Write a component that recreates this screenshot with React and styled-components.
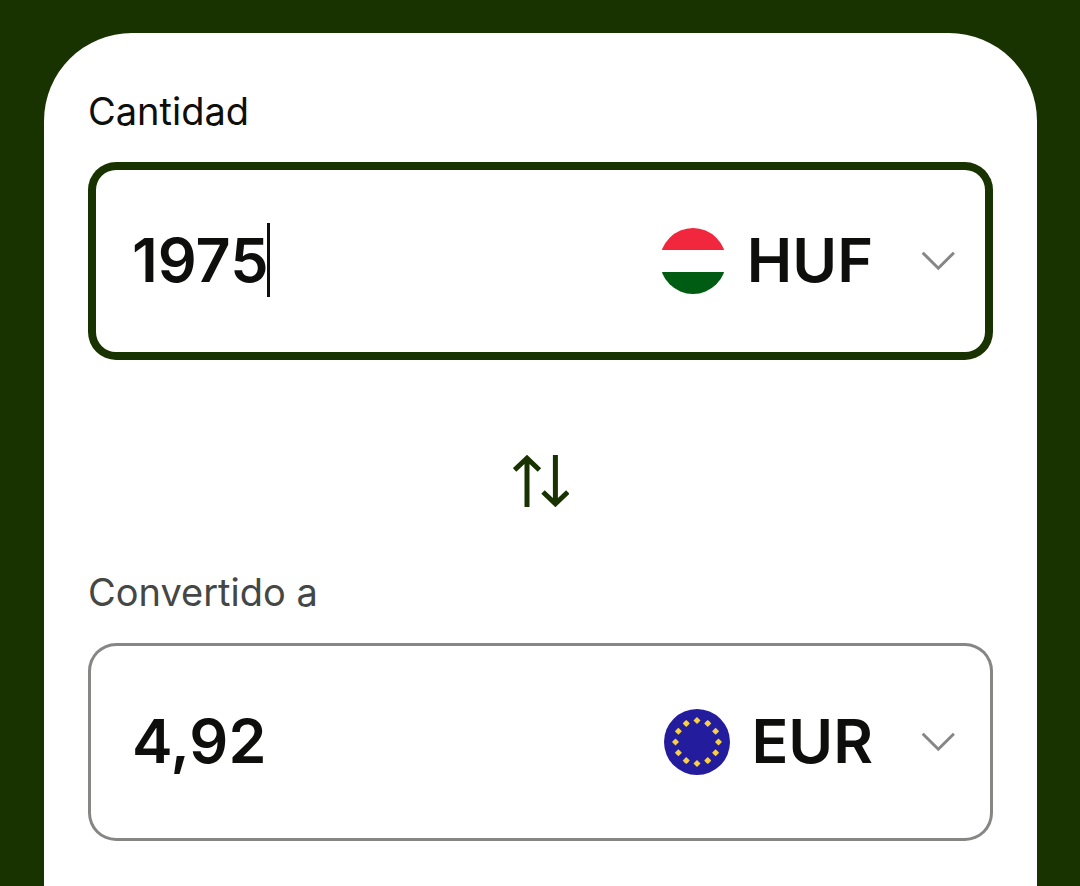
import React, { useState } from 'react';
import styled, { createGlobalStyle, css } from 'styled-components';

const colors = {
  forest: '#183300',
  ink: '#0e0f0c',
  label: '#454745',
  outline: '#868685',
  white: '#ffffff',
};

const currencies = ['HUF', 'EUR'];

export default function App() {
  const [from, setFrom] = useState({ amount: '1975', currency: 'HUF' });
  const [to, setTo] = useState({ amount: '4,92', currency: 'EUR' });
  const [active, setActive] = useState('from');

  const swap = () => {
    setFrom(to);
    setTo(from);
  };

  return (
    <Page>
      <GlobalStyle />

      <Card>
        <MoneyField
          id="from"
          label="Cantidad"
          value={from}
          onChange={setFrom}
          active={active === 'from'}
          onActivate={setActive}
        />

        <SwapButton type="button" aria-label="Intercambiar" onClick={swap}>
          <SwapIcon />
        </SwapButton>

        <MoneyField
          id="to"
          label="Convertido a"
          value={to}
          onChange={setTo}
          active={active === 'to'}
          onActivate={setActive}
        />
      </Card>
    </Page>
  );
}

function MoneyField({ id, label, value, onChange, active, onActivate }) {
  return (
    <Field>
      <Label id={`${id}-label`} htmlFor={id} $active={active}>
        {label}
      </Label>

      <Box $active={active} onFocus={() => onActivate(id)}>
        <AmountWrapper>
          <Amount
            id={id}
            type="text"
            inputMode="decimal"
            value={value.amount}
            onChange={(e) => onChange({ ...value, amount: e.target.value })}
          />
          {active && <Caret />}
        </AmountWrapper>

        <Currency>
          {value.currency === 'HUF' ? <HungaryFlag /> : <EuropeFlag />}
          <CurrencySelect
            aria-labelledby={`${id}-label`}
            value={value.currency}
            onChange={(e) => onChange({ ...value, currency: e.target.value })}
          >
            {currencies.map((code) => (
              <option key={code}>{code}</option>
            ))}
          </CurrencySelect>
          <Chevron />
        </Currency>
      </Box>
    </Field>
  );
}

function HungaryFlag() {
  return (
    <Flag viewBox="0 0 66 66" aria-hidden="true">
      <clipPath id="hungary">
        <circle cx="33" cy="33" r="33" />
      </clipPath>
      <g clipPath="url(#hungary)">
        <rect width="66" height="66" fill="#ffffff" />
        <rect width="66" height="22" fill="#f1273e" />
        <rect y="44" width="66" height="22" fill="#005b13" />
      </g>
    </Flag>
  );
}

function EuropeFlag() {
  const angles = Array.from({ length: 12 }, (_, i) => (i * Math.PI) / 6);

  return (
    <Flag viewBox="0 0 66 66" aria-hidden="true">
      <circle cx="33" cy="33" r="33" fill="#231c9c" />
      {angles.map((angle) => {
        const x = 33 + 21.5 * Math.sin(angle);
        const y = 33 - 21.5 * Math.cos(angle);

        return (
          <path
            key={angle}
            d={`M${x} ${y - 3.5}l1.8 1.7 1.7 1.8-1.7 1.8-1.8 1.7-1.8-1.7-1.7-1.8 1.7-1.8z`}
            fill="#f8d045"
          />
        );
      })}
    </Flag>
  );
}

function Chevron() {
  return (
    <ChevronSvg viewBox="0 0 34 20" aria-hidden="true">
      <path d="M1.7 1.7 17.3 17.2 32.9 1.7" />
    </ChevronSvg>
  );
}

function SwapIcon() {
  return (
    <SwapSvg viewBox="0 0 56 52" aria-hidden="true">
      <path d="M14 52V3M1.6 15 14 3.2 26.4 15" />
      <path d="M42.4 0v49M30 37 42.4 48.8 54.8 37" />
    </SwapSvg>
  );
}

const GlobalStyle = createGlobalStyle`
  *,
  *::before,
  *::after {
    box-sizing: border-box;
  }

  body {
    margin: 0;
    background: ${colors.forest};
    color: ${colors.ink};
    font-family: Inter, 'Liberation Sans', sans-serif;
  }
`;

const valueText = css`
  field-sizing: content;
  height: 74px;
  padding: 0;
  border: 0;
  outline: 0;
  background: transparent;
  color: inherit;
  font: 600 61px/74px Inter, 'Liberation Sans', sans-serif;
`;

const Page = styled.main`
  display: flex;
  flex-direction: column;
  min-height: 100vh;
  padding: 33px 43px 0 44px;
`;

const Card = styled.section`
  flex: 1;
  display: flex;
  flex-direction: column;
  padding: 54px 44px 44px;
  border-radius: 88px 88px 0 0;
  background: ${colors.white};
`;

const Field = styled.div`
  display: flex;
  flex-direction: column;
  gap: 27px;
`;

const Label = styled.label`
  color: ${({ $active }) => ($active ? colors.ink : colors.label)};
  font-size: 38px;
  line-height: 48px;
`;

const Box = styled.div`
  display: flex;
  align-items: center;
  justify-content: space-between;
  gap: 24px;
  padding: 61px 38px 61px 44px;
  border-radius: 28px;
  box-shadow: inset 0 0 0
    ${({ $active }) => ($active ? `8px ${colors.forest}` : `3px ${colors.outline}`)};
`;

const AmountWrapper = styled.div`
  flex: 1;
  display: flex;
  min-width: 0;
  height: 76px;
`;

const Amount = styled.input`
  ${valueText}
  min-width: 0;
  caret-color: transparent;
`;

const Caret = styled.span`
  flex: none;
  width: 3px;
  height: 74px;
  margin-left: -2px;
  background: ${colors.ink};
`;

const Currency = styled.div`
  display: flex;
  align-items: center;
`;

const Flag = styled.svg`
  flex: none;
  width: 66px;
  height: 66px;
  margin-right: 21px;
`;

const CurrencySelect = styled.select`
  ${valueText}
  appearance: none;
  margin-bottom: 2px;
  cursor: pointer;
`;

const ChevronSvg = styled.svg`
  flex: none;
  width: 34px;
  height: 20px;
  margin-left: 48px;
  fill: none;
  stroke: ${colors.outline};
  stroke-width: 3;
  pointer-events: none;
`;

const SwapButton = styled.button`
  align-self: center;
  display: flex;
  align-items: center;
  justify-content: center;
  width: 88px;
  height: 88px;
  margin: 77px 0 43px;
  padding: 0;
  border: 0;
  border-radius: 44px;
  background: transparent;
  cursor: pointer;
`;

const SwapSvg = styled.svg`
  width: 56px;
  height: 52px;
  fill: none;
  stroke: ${colors.forest};
  stroke-width: 5;
`;
